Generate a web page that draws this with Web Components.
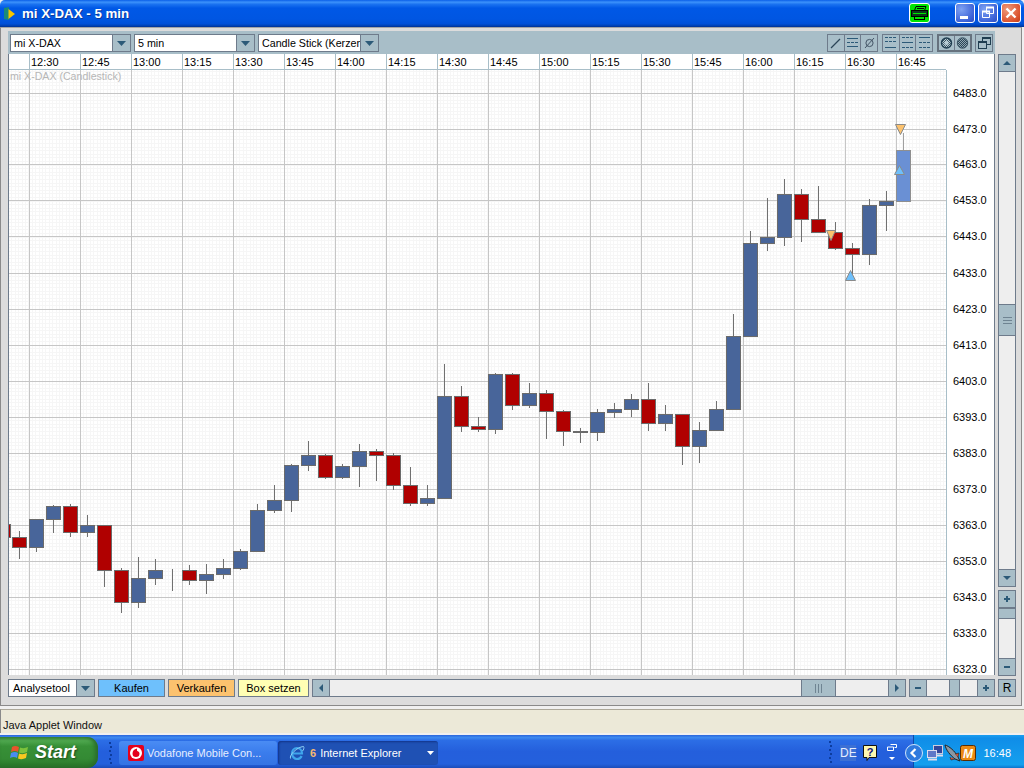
<!DOCTYPE html>
<html>
<head>
<meta charset="utf-8">
<title>mi X-DAX - 5 min</title>
<style>
  html, body { margin: 0; padding: 0; width: 1024px; height: 768px; overflow: hidden; background: #f0f0f0; font: 11px "Liberation Sans", Arial, sans-serif; color: #000; }
  #app { display: flex; flex-direction: column; width: 1024px; height: 768px; }
</style>
</head>
<body>
<div id="app">
  <xp-titlebar>mi X-DAX - 5 min</xp-titlebar>
  <applet-panel></applet-panel>
  <java-status>Java Applet Window</java-status>
  <xp-taskbar></xp-taskbar>
</div>

<script>
const LINE = '#6e7b8b';
const STEEL = '#a8bec8';
const INK = '#2c5a78';

class XpTitlebar extends HTMLElement {
  connectedCallback() {
    this.attachShadow({ mode: 'open' });
    this.shadowRoot.innerHTML = `
      <style>
        :host { display: flex; align-items: center; height: 27px; flex: none; box-sizing: border-box; padding: 0 3px 1px 4px;
          background: linear-gradient(#0a5fe8 0, #3c92fb 8%, #1a72f0 16%, #0058e6 30%, #0056e2 70%, #0050d8 88%, #0040b0 96%, #002f90 100%); border-radius: 5px 5px 0 0; }
        .ico { width: 11px; height: 13px; margin-right: 7px; margin-top: 1px; }
        .name { flex: 1; color: #fff; font: bold 13.3px "Liberation Sans", Arial, sans-serif; text-shadow: 1px 1px 0 #0c3a9c; white-space: nowrap; }
        .print { width: 21px; height: 20px; margin-right: 22px; box-sizing: border-box; border: 1px solid #fff; border-radius: 3px; background: #00e400; display: flex; align-items: center; justify-content: center; }
        .btn { width: 20px; height: 20px; box-sizing: border-box; border: 1px solid #fff; border-radius: 3px; margin-left: 3px; display: block;
          background: radial-gradient(circle at 30% 30%, #7ea2f2, #3d63d8 70%, #2c4cc0); }
        .btn.close { background: radial-gradient(circle at 30% 30%, #ee9a7c, #dc5430 70%, #c03c18); }
      </style>
      <svg class="ico" viewBox="0 0 11 13"><path d="M0 1 L5 0 V13 L0 12 Z" fill="#1a8a78"/><path d="M4.5 2 L11 7 L4.5 12 Z" fill="#f6c600"/></svg>
      <span class="name"><slot></slot></span>
      <span class="print"><svg width="17" height="16" viewBox="0 0 17 16"><path d="M5 1.5h10l-1.5 4H3.5z" fill="#00e400" stroke="#000"/><path d="M6 3.5h7" stroke="#000"/><rect x=".5" y="5.5" width="16" height="6" fill="#0a3a1a" stroke="#000"/><path d="M2 8.5h13" stroke="#00e400"/><rect x="3.5" y="11.5" width="10" height="3" fill="#00e400" stroke="#000"/></svg></span>
      <svg class="btn" viewBox="0 0 18 18"><rect x="4" y="12" width="8" height="3" fill="#fff"/></svg>
      <svg class="btn" viewBox="0 0 18 18"><path d="M7.5 3.5h7v6h-7z M3.5 7.5h7v6h-7z" fill="none" stroke="#fff"/><path d="M7 3.5h8M3 7.5h8" stroke="#fff" stroke-width="2"/></svg>
      <svg class="btn close" viewBox="0 0 18 18"><path d="M4.5 4.5 L13.5 13.5 M13.5 4.5 L4.5 13.5" stroke="#fff" stroke-width="2.4"/></svg>
    `;
  }
}

class JavaCombo extends HTMLElement {
  connectedCallback() {
    this.attachShadow({ mode: 'open' });
    this.shadowRoot.innerHTML = `
      <style>
        :host { display: flex; height: 18px; box-sizing: border-box; border: 1px solid ${LINE}; background: #fff; flex: none; }
        .txt { flex: 1; min-width: 0; padding-left: var(--pad, 3px); font-size: var(--size, 10.7px); line-height: 16px; overflow: hidden; white-space: nowrap; }
        .arr { width: 17px; flex: none; background: ${STEEL}; border-left: 1px solid ${LINE}; display: flex; align-items: center; justify-content: center; }
      </style>
      <span class="txt"><slot></slot></span>
      <span class="arr"><svg width="9" height="5"><path d="M0 0h9L4.5 5z" fill="${INK}"/></svg></span>
    `;
  }
}

class JavaButton extends HTMLElement {
  connectedCallback() {
    this.attachShadow({ mode: 'open' });
    this.shadowRoot.innerHTML = `
      <style>
        :host { display: flex; align-items: center; justify-content: center; height: 18px; box-sizing: border-box; border: 1px solid ${LINE}; flex: none; font-size: 11px; }
      </style>
      <slot></slot>
    `;
  }
}

// one scrollbar, vertical or horizontal. before = px of track ahead of the thumb
class JavaScroll extends HTMLElement {
  icon(name) {
    const paths = {
      up: 'M5 11 L9 7 L13 11 Z',
      down: 'M5 7 L13 7 L9 11 Z',
      left: 'M11 5 L11 13 L7 9 Z',
      right: 'M7 5 L7 13 L11 9 Z',
      plus: 'M6 8h6v2H6z M8 6h2v6H8z',
      minus: 'M6 8h6v2H6z'
    };
    return `<svg width="16" height="16" viewBox="1 1 16 16"><path d="${paths[name]}" fill="${INK}"/></svg>`;
  }

  connectedCallback() {
    const vertical = this.getAttribute('orient') === 'v';
    const before = this.getAttribute('before');
    const thumb = this.getAttribute('thumb');
    const grip = this.hasAttribute('grip');
    const gripSvg = vertical
      ? `<svg width="9" height="7"><path d="M0 .5h9M0 3.5h9M0 6.5h9" stroke="#6f8492"/></svg>`
      : `<svg width="7" height="9"><path d="M.5 0v9M3.5 0v9M6.5 0v9" stroke="#6f8492"/></svg>`;
    this.attachShadow({ mode: 'open' });
    this.shadowRoot.innerHTML = `
      <style>
        :host { display: flex; flex-direction: ${vertical ? 'column' : 'row'}; box-sizing: border-box; flex: none; background: #eee; }
        .btn, .thumb { flex: none; box-sizing: border-box; background: ${STEEL}; border: 1px solid ${LINE}; display: flex; align-items: center; justify-content: center; }
        .btn { width: 18px; height: 18px; }
        .track { box-sizing: border-box; background: #eee; border: solid ${LINE}; border-width: ${vertical ? '0 1px' : '1px 0'}; flex: none; }
        .rest { flex: 1; }
      </style>
      <span class="btn">${this.icon(this.getAttribute('start'))}</span>
      <span class="track" style="${vertical ? 'height' : 'width'}:${before}px"></span>
      <span class="thumb" style="${vertical ? 'height:' + thumb + 'px' : 'width:' + thumb + 'px'}">${grip ? gripSvg : ''}</span>
      <span class="track rest"></span>
      <span class="btn">${this.icon(this.getAttribute('end'))}</span>
    `;
  }
}

class ChartToolbar extends HTMLElement {
  connectedCallback() {
    const dash = (y) => `<path d="M3 ${y}h3M7 ${y}h3M11 ${y}h3" stroke="${INK}"/>`;
    const solid = (y) => `<path d="M3 ${y}h11" stroke="${INK}"/>`;
    const svg = (inner) => `<svg width="17" height="16" viewBox="0 0 17 16">${inner}</svg>`;
    this.attachShadow({ mode: 'open' });
    this.shadowRoot.innerHTML = `
      <style>
        :host { display: flex; align-items: flex-start; gap: 3px; box-sizing: border-box; height: 23px; padding: 3px 2px 0 2px; background: ${STEEL}; }
        java-combo { width: 121px; }
        .fill { flex: 1; }
        .group { display: flex; height: 18px; box-sizing: border-box; border: 1px solid ${LINE}; flex: none; }
        .g1 { width: 51px; margin-left: 1px; }
        .g2 { width: 35px; margin-left: 1px; border-width: 2px; border-color: #66727e; }
        .g3 { width: 18px; }
        .group span { display: flex; flex: 1; min-width: 0; align-items: center; justify-content: center; border-left: 1px solid ${LINE}; }
        .group span:first-child { border-left: 0; }
        svg { flex: none; }
      </style>
      <java-combo>mi X-DAX</java-combo>
      <java-combo>5 min</java-combo>
      <java-combo>Candle Stick (Kerzen)</java-combo>
      <span class="fill"></span>
      <div class="group g1">
        <span>${svg('<path d="M4 13 L13 4" stroke="#2b4557" stroke-width="1.3"/>')}</span>
        <span>${svg(solid(3.5) + dash(7.5) + solid(11.5))}</span>
        <span>${svg('<circle cx="8.5" cy="8" r="3.6" fill="none" stroke="#456"/><path d="M4 13 L13 3" stroke="#456"/>')}</span>
      </div>
      <div class="group g1">
        <span>${svg(dash(2.5) + dash(6.5) + solid(12.5))}</span>
        <span>${svg(dash(2.5) + solid(7.5) + dash(12.5))}</span>
        <span>${svg(solid(2.5) + dash(7.5) + dash(12.5))}</span>
      </div>
      <div class="group g2">
        <span>${svg('<defs><pattern id="h1" width="2" height="2" patternUnits="userSpaceOnUse"><rect width="2" height="2" fill="#b8ccd4"/><rect width="1" height="1" fill="#3a5464"/><rect x="1" y="1" width="1" height="1" fill="#3a5464"/></pattern></defs><circle cx="8.5" cy="8" r="5" fill="url(#h1)" stroke="#1f3d50" stroke-width="1.4"/><circle cx="8.5" cy="8" r="2" fill="#b8ccd4"/>')}</span>
        <span>${svg('<defs><pattern id="h2" width="2" height="2" patternUnits="userSpaceOnUse"><rect width="2" height="2" fill="#8fa6b2"/><rect width="1" height="1" fill="#2b4555"/><rect x="1" y="1" width="1" height="1" fill="#2b4555"/></pattern></defs><circle cx="8.5" cy="8" r="5.2" fill="url(#h2)" stroke="#3a5464"/>')}</span>
      </div>
      <div class="group g3">
        <span>${svg('<rect x="6.5" y="2.5" width="8" height="7" fill="none" stroke="#1f3d50"/><path d="M6.5 3.5h8" stroke="#1f3d50"/><rect x="2.5" y="6.5" width="8" height="7" fill="' + STEEL + '" stroke="#1f3d50"/><path d="M2.5 7.5h8" stroke="#1f3d50"/>')}</span>
      </div>
    `;
  }
}

// [wick top, wick bottom, body top, body bottom, r|b], 17px apart from x=19
const CANDLES = [
  [531, 558, 537, 547, 'r'], [519, 551, 519, 547, 'b'], [505, 532, 506, 519, 'b'], [504, 536, 506, 532, 'r'],
  [515, 536, 525, 532, 'b'], [525, 586, 525, 570, 'r'], [568, 612, 570, 602, 'r'], [557, 607, 578, 602, 'b'],
  [559, 584, 570, 578, 'b'], [569, 590, 570, 570, 'b'], [565, 584, 570, 580, 'r'], [564, 593, 574, 580, 'b'],
  [559, 578, 568, 574, 'b'], [549, 569, 551, 568, 'b'], [504, 551, 510, 551, 'b'], [485, 512, 500, 510, 'b'],
  [464, 511, 465, 500, 'b'], [441, 470, 455, 465, 'b'], [454, 478, 455, 477, 'r'], [464, 478, 466, 477, 'b'],
  [444, 486, 451, 466, 'b'], [449, 480, 451, 455, 'r'], [453, 489, 455, 485, 'r'], [467, 505, 485, 503, 'r'],
  [485, 505, 498, 503, 'b'], [364, 498, 396, 498, 'b'], [386, 431, 396, 426, 'r'], [417, 431, 426, 429, 'r'],
  [373, 433, 374, 429, 'b'], [373, 409, 374, 405, 'r'], [383, 407, 393, 405, 'b'], [390, 438, 393, 411, 'r'],
  [410, 445, 411, 431, 'r'], [428, 442, 431, 432, 'b'], [409, 440, 412, 432, 'b'], [403, 417, 409, 412, 'b'],
  [394, 416, 399, 409, 'b'], [383, 430, 399, 423, 'r'], [405, 430, 414, 423, 'b'], [414, 464, 414, 446, 'r'],
  [422, 462, 430, 446, 'b'], [401, 430, 409, 430, 'b'], [314, 409, 336, 409, 'b'], [231, 336, 243, 336, 'b'],
  [198, 250, 237, 243, 'b'], [179, 245, 194, 237, 'b'], [189, 241, 194, 219, 'r'], [186, 232, 219, 232, 'r'],
  [222, 249, 232, 248, 'r'], [243, 280, 248, 254, 'r'], [199, 264, 205, 254, 'b'], [191, 230, 201, 205, 'b'],
  [133, 201, 150, 201, 'l']
];
const PRICE_Y = [93, 129, 164, 200, 236, 273, 309, 345, 381, 417, 453, 489, 525, 561, 597, 633, 669];

class CandleChart extends HTMLElement {
  connectedCallback() {
    this.attachShadow({ mode: 'open' });
    this.render();
  }

  render() {
    const grid = '#c6c6c6', minor = '#f6f6f6';
    let minors = '', majors = '', ticks = '', labels = '', bars = '';

    for (let x = 29 - 51 * 2; x < 946; x += 3.4) {
      if (x > 9) minors += `M${Math.floor(x) + 0.5} 70V675`;
    }
    for (let i = 0; i < 170; i++) {
      const y = 93 - 36 * 1 + i * 3.6;
      if (y > 70 && y < 675) minors += `M9 ${Math.floor(y) + 0.5}H946`;
    }

    const mins = 12 * 60 + 30;
    for (let i = 0; i < 18; i++) {
      const x = 29 + 51 * i;
      majors += `M${x + 0.5} 70V675`;
      ticks += `M${x + 0.5} 54V69`;
      const t = mins + 15 * i;
      const lab = Math.floor(t / 60) + ':' + String(t % 60).padStart(2, '0');
      labels += `<text x="${x + 2}" y="66">${lab}</text>`;
    }
    PRICE_Y.forEach((y, i) => {
      majors += `M9 ${y + 0.5}H946`;
      labels += `<text x="953" y="${y + 4}">${(6483 - i * 10).toFixed(1)}</text>`;
    });

    const colors = { r: '#b00000', b: '#48659a', l: '#6a90d4' };
    bars += `<rect x="3.5" y="524.5" width="7" height="13" fill="#b00000" stroke="#6b6b6b"/>`;
    CANDLES.forEach((c, i) => {
      const x = 19 + 17 * i;
      const edge = c[4] === 'l' ? '#8f8f8f' : '#6b6b6b';
      bars += `<path d="M${x + 0.5} ${c[0]}V${c[1] + 1}" stroke="${c[4] === 'l' ? '#a0a0a0' : '#707070'}"/>`;
      bars += `<rect x="${x - 7 + 0.5}" y="${c[2] + 0.5}" width="14" height="${c[3] - c[2]}" fill="${colors[c[4]]}" stroke="${edge}"/>`;
    });

    const marker = (pts, fill) => `<polygon points="${pts}" fill="${fill}" stroke="#8a8a8a"/>`;
    const markers = marker('895.5,124.5 905.5,124.5 900.5,134.5', '#fcc26e')
      + marker('899.5,165.5 904.5,174.5 894.5,174.5', '#6ec0fc')
      + marker('826.5,230.5 835.5,230.5 831,240.5', '#fcc26e')
      + marker('850.5,270.5 855.5,280.5 845.5,280.5', '#6ec0fc');

    this.shadowRoot.innerHTML = `
      <style>
        :host { display: block; width: 987px; height: 621px; background: #fff; }
        svg { display: block; }
        text { font: 11px "Liberation Sans", Arial, sans-serif; fill: #000; }
        .title { fill: #b6b6b6; font-size: 10.6px; }
      </style>
      <svg width="987" height="621" viewBox="8 54 987 621" shape-rendering="crispEdges">
        <path d="${minors}" stroke="${minor}" fill="none"/>
        <path d="${majors}" stroke="${grid}" fill="none"/>
        <path d="${ticks}M9 69.5H946M946.5 70V675" stroke="${STEEL}" fill="none"/>
        <text class="title" x="10" y="80">mi X-DAX (Candlestick)</text>
        ${labels}
        <g>${bars}</g>
        <g shape-rendering="auto">${markers}</g>
        <path d="M8.5 54V675M994.5 54V675M8 675.5H995" stroke="${LINE}" fill="none"/>
      </svg>
    `;
  }
}

class AppletPanel extends HTMLElement {
  connectedCallback() {
    this.attachShadow({ mode: 'open' });
    this.shadowRoot.innerHTML = `
      <style>
        :host { display: grid; grid-template-columns: 987px 18px; grid-template-rows: 23px 621px 18px; column-gap: 3px; flex: none;
          align-content: start; box-sizing: border-box; width: 1022px; height: 679px; padding: 3px 0 0 7px; background: #dcdcdc; border: 1px solid #8a8a8a; border-top-color: #a4a4a4; }
        .side { display: flex; flex-direction: column; gap: 3px; }
        .bottom { display: flex; gap: 3px; margin-top: 4px; grid-column: 1; }
        .r { margin-top: 4px; background: ${STEEL}; font-size: 12px; }
        .side-top { grid-column: 2; grid-row: 1; }
      </style>
      <chart-toolbar></chart-toolbar>
      <span class="side-top"></span>
      <candle-chart></candle-chart>
      <div class="side">
        <java-scroll orient="v" style="height:533px" start="up" end="down" before="232" thumb="32" grip></java-scroll>
        <java-scroll orient="v" style="height:86px" start="plus" end="minus" before="0" thumb="11"></java-scroll>
      </div>
      <div class="bottom">
        <java-combo style="width:87px;--pad:4px;--size:11px">Analysetool</java-combo>
        <java-button style="width:67px;background:#6ec0fc">Kaufen</java-button>
        <java-button style="width:67px;background:#fcc26e">Verkaufen</java-button>
        <java-button style="width:71px;background:#ffffb4">Box setzen</java-button>
        <java-scroll orient="h" style="width:594px;height:18px" start="left" end="right" before="471" thumb="35" grip></java-scroll>
        <java-scroll orient="h" style="width:86px;height:18px" start="minus" end="plus" before="22" thumb="11"></java-scroll>
      </div>
      <java-button class="r">R</java-button>
    `;
  }
}

class JavaStatus extends HTMLElement {
  connectedCallback() {
    this.attachShadow({ mode: 'open' });
    this.shadowRoot.innerHTML = `
      <style>
        :host { display: flex; align-items: flex-end; flex: none; height: 24px; margin-top: 3px; box-sizing: border-box; padding: 0 0 2px 2px;
          background: #ece9d8; border-top: 1px solid #aca899; border-left: 1px solid #8a8a8a; font: 11px "Liberation Sans", Arial, sans-serif; color: #111; }
      </style>
      <slot></slot>
    `;
  }
}

class XpTaskbar extends HTMLElement {
  connectedCallback() {
    const grip = `<svg class="grip" width="4" height="24" viewBox="0 0 4 24">${[1, 5, 9, 13, 17, 21].map((y) => `<rect x="${y % 8 === 1 ? 0 : 1}" y="${y}" width="2" height="2" fill="#0c3c9e"/>`).join('')}</svg>`;
    this.attachShadow({ mode: 'open' });
    this.shadowRoot.innerHTML = `
      <style>
        :host { display: flex; align-items: center; flex: none; height: 33px; margin-top: 2px; box-sizing: border-box; padding-top: 2px; color: #fff; font: 11px "Liberation Sans", Arial, sans-serif;
          background: linear-gradient(#2a66dc 0, #3d8af0 8%, #2c6ee6 16%, #245fdc 50%, #2460dc 88%, #1c4cb8 100%); }
        svg { display: block; flex: none; }
        .start { display: flex; align-items: center; width: 98px; height: 31px; box-sizing: border-box; padding: 0 0 0 10px; flex: none; border-radius: 0 11px 11px 0;
          background: linear-gradient(#3f8f3f 0, #4fa84f 12%, #379037 30%, #348a34 70%, #2b7a2b 90%, #296f29 100%); box-shadow: inset -3px 0 4px #2a6b2a; }
        .start b { margin-left: 5px; font: italic bold 18px "Liberation Sans", Arial, sans-serif; text-shadow: 1px 1px 2px #1c4a1c; }
        .grip { margin-left: 11px; }
        .task { display: flex; align-items: center; width: 158px; height: 24px; box-sizing: border-box; flex: none; border-radius: 3px; white-space: nowrap; }
        .one { margin-left: 6px; padding-left: 9px; background: linear-gradient(#4a8cf4, #3a7cec 50%, #3474e4); color: #e6eeff; }
        .one svg { margin-right: 3px; }
        .two { margin-left: 1px; width: 160px; padding-left: 11px; background: #1f51b4; box-shadow: inset 1px 1px 2px #12348a; }
        .two svg.ie { margin-right: 5px; }
        .two i { font-style: normal; font-weight: bold; color: #f5b870; margin-right: 4px; }
        .two .caret { margin-left: auto; margin-right: 4px; }
        .tail { margin-left: auto; margin-top: -2px; display: flex; align-items: center; }
        .tail .grip { margin: 0 7px 0 0; }
        .lang { width: 16px; height: 16px; margin-top: 2px; background: #3c70d4; text-align: center; font-size: 12px; line-height: 16px; color: #e6eeff; }
        .help { margin-left: 7px; margin-top: 2px; }
        .restore { display: flex; flex-direction: column; align-items: center; gap: 6px; margin-left: 10px; margin-right: 16px; }
        .tray { display: flex; align-items: center; width: 111px; height: 33px; box-sizing: border-box; border-left: 1px solid #0f4aa8; padding: 2px 13px 0 0;
          background: linear-gradient(#1a9ef0 0, #0f8de8 10%, #1399ec 60%, #14a0ee 90%, #0c74cc 100%); }
        .chev { margin-left: -9px; }
        .net { margin-left: 2px; }
        .rocket { margin-left: -2px; }
        .mm { margin-left: -1px; }
        .clock { margin-left: auto; }
      </style>
      <div class="start">
        <svg width="20" height="20" viewBox="0 0 20 20">
          <path d="M2 4 Q5 2 9 4 L8 9 Q5 7 1 9 Z" fill="#e8542c"/>
          <path d="M10 4.5 Q14 6 18 4 L17 9 Q13 11 9 9.5 Z" fill="#7cc23c"/>
          <path d="M1 10 Q5 8 8 10 L7 15 Q4 13 0 15 Z" fill="#4a8cf0"/>
          <path d="M9 10.5 Q13 12 17 10 L16 15 Q12 17 8 15.5 Z" fill="#f8c820"/>
        </svg>
        <b>Start</b>
      </div>
      ${grip}
      <div class="task one">
        <svg width="16" height="16" viewBox="0 0 16 16"><rect width="16" height="16" rx="2" fill="#e4001c"/><circle cx="8" cy="8" r="6" fill="#fff"/><path d="M9 3.5 C6 4 4.5 6 4.5 8.5 A3.5 3.5 0 0 0 11.5 8.5 C11.5 6.8 10 6.4 9 5.8 Z" fill="#e4001c"/></svg>
        <span>Vodafone Mobile Con...</span>
      </div>
      <div class="task two">
        <svg class="ie" width="16" height="16" viewBox="0 0 16 16"><path d="M3.5 8.5 H13 C13 5 10.5 3 8 3 C5 3 3 5.5 3 8.5 C3 11.5 5.5 14 8 14 C10 14 11.8 13 12.6 11" fill="none" stroke="#3fa6ec" stroke-width="2.2"/><path d="M1.5 13.5 C0 10 8 2 14.5 1.5 C15.5 2.5 14.5 5 13.5 6" fill="none" stroke="#8fd0f6"/></svg>
        <i>6</i><span>Internet Explorer</span>
        <svg class="caret" width="7" height="4"><path d="M0 0h7L3.5 4z" fill="#fff"/></svg>
      </div>
      <div class="tail">
        ${grip}
        <span class="lang">DE</span>
        <svg class="help" width="14" height="16" viewBox="0 0 14 16"><path d="M.5 .5h13v12H6l-2 3v-3H.5z" fill="#fff8b0" stroke="#111"/><text x="7" y="11" text-anchor="middle" font-family="Liberation Sans" font-weight="bold" font-size="11" fill="#10107a">?</text></svg>
        <div class="restore">
          <svg width="10" height="7"><path d="M3.5 .5h6v3h-2M.5 3h6v3.5h-6z" fill="none" stroke="#fff"/></svg>
          <svg width="6" height="3"><path d="M0 0h6L3 3z" fill="#fff"/></svg>
        </div>
        <div class="tray">
          <svg class="chev" width="18" height="18" viewBox="0 0 18 18"><circle cx="9" cy="9" r="8.5" fill="#2f7ade" stroke="#cfe4fb"/><path d="M10.5 5 L6.5 9 L10.5 13" fill="none" stroke="#fff" stroke-width="2.2"/></svg>
          <svg class="net" width="20" height="18" viewBox="0 0 20 18"><rect x="8.5" y="1.5" width="9" height="8" fill="#33469a" stroke="#ccd"/><rect x="2.5" y="6.5" width="9" height="7" fill="#5f78c8" stroke="#dde"/><path d="M3 15.5h9M12 11.5h6" stroke="#dde" stroke-width="2"/></svg>
          <svg class="rocket" width="18" height="18" viewBox="0 0 18 18"><path d="M2 1 C6 2 12 7 15 13 L17 17 L12 15 C7 11 3 6 2 1Z" fill="#8b97a3" stroke="#222"/><path d="M12 10 L16 9 L15 13 M7 13 L8 16 L12 15" fill="#d05030" stroke="#222" stroke-width=".6"/></svg>
          <svg class="mm" width="16" height="16" viewBox="0 0 16 16"><rect x=".5" y=".5" width="15" height="15" rx="2" fill="#ec8a14" stroke="#5a2c00"/><text x="8" y="12.5" text-anchor="middle" font-family="Liberation Sans" font-style="italic" font-weight="bold" font-size="12" fill="#fff">M</text></svg>
          <span class="clock">16:48</span>
        </div>
      </div>
    `;
  }
}

customElements.define('xp-titlebar', XpTitlebar);
customElements.define('java-combo', JavaCombo);
customElements.define('java-button', JavaButton);
customElements.define('java-scroll', JavaScroll);
customElements.define('chart-toolbar', ChartToolbar);
customElements.define('candle-chart', CandleChart);
customElements.define('applet-panel', AppletPanel);
customElements.define('java-status', JavaStatus);
customElements.define('xp-taskbar', XpTaskbar);
</script>
</body>
</html>
